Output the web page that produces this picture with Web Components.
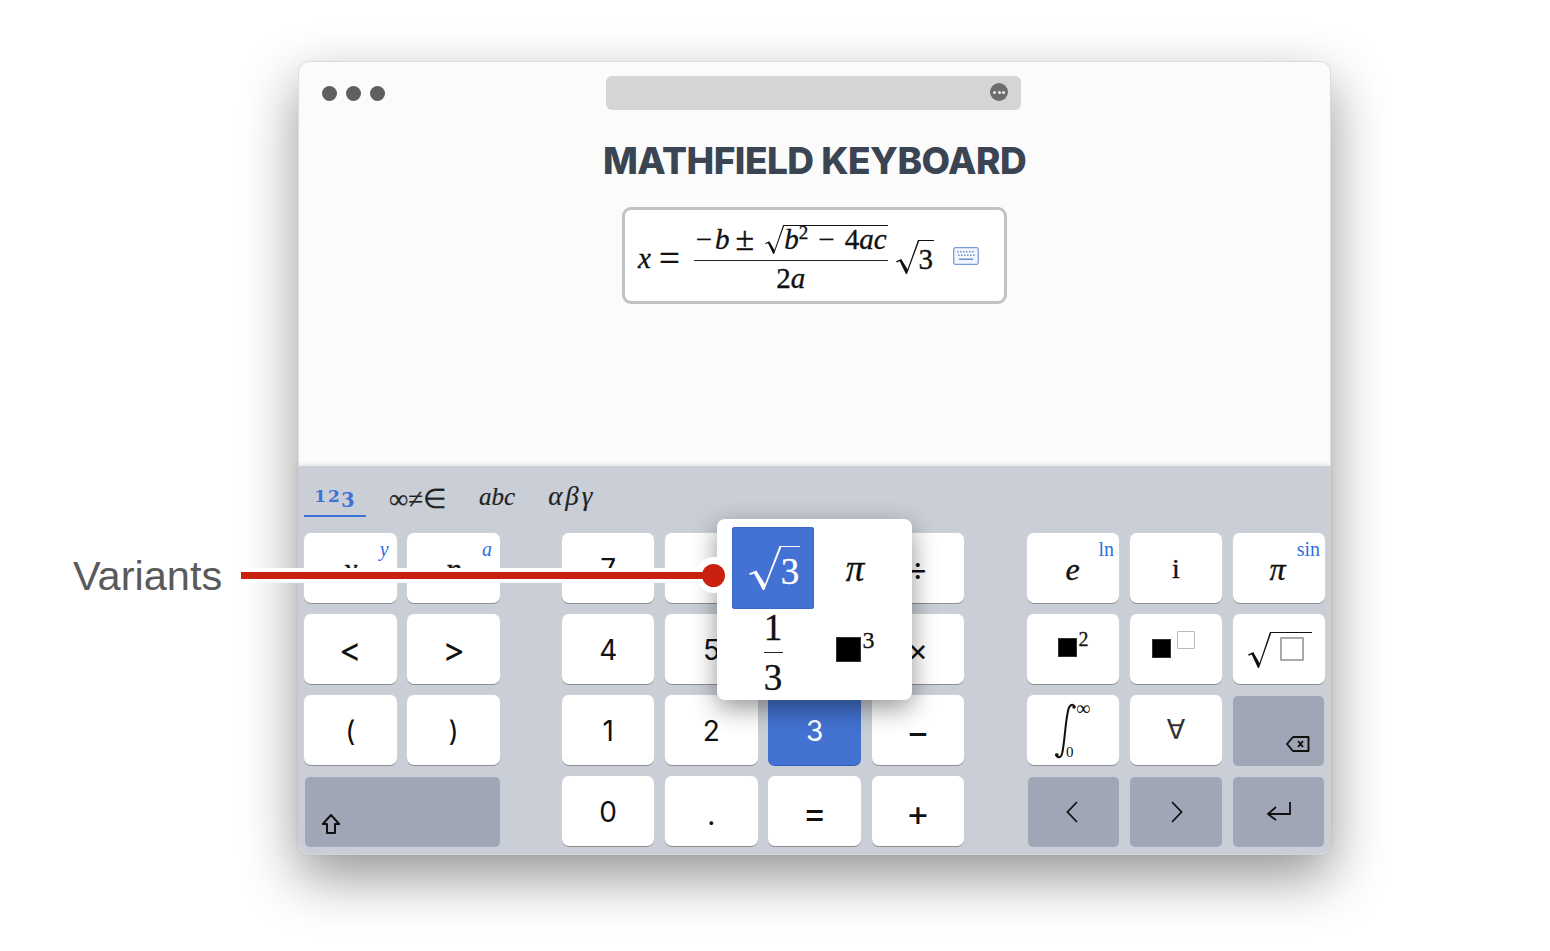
<!DOCTYPE html>
<html lang="en">
<head>
<meta charset="utf-8">
<title>Mathfield keyboard</title>
<style>
  html, body { margin: 0; background: #fff; }
  body { font-family: "Liberation Sans", sans-serif; overflow: hidden; }
</style>
</head>
<body>
<demo-stage>
  <demo-window>
    <h-title slot="title">MATHFIELD KEYBOARD</h-title>
    <math-field slot="field">
      <math-glyph italic size="29">x</math-glyph>
      <math-glyph size="37" style="margin:0 14px 0 8px">=</math-glyph>
      <math-frac style="margin-top:-1px">
        <math-glyph slot="top" size="29" style="margin-left:2px">−<i style="margin-left:3px">b</i></math-glyph>
        <math-glyph slot="top" size="34" style="margin:0 11px 0 6px">±</math-glyph>
        <math-sqrt slot="top" h="29" w="19" bar="1">
          <math-glyph size="29"><i>b</i><sup style="font-size:19px;line-height:0;vertical-align:10px">2</sup></math-glyph>
          <math-glyph size="29" style="margin:0 10px 0 10px">−</math-glyph>
          <math-glyph size="29">4<i>ac</i></math-glyph>
        </math-sqrt>
        <math-glyph slot="bottom" size="29">2<i>a</i></math-glyph>
      </math-frac>
      <math-sqrt h="34" w="23" bar="1" style="margin-left:8px;margin-top:-2px"><math-glyph size="29">3</math-glyph></math-sqrt>
      <kbd-toggle style="margin-left:19px"></kbd-toggle>
    </math-field>
    <virtual-keyboard slot="keyboard">
      <kb-tab slot="tabs" active><span>12<span style="display:inline-block;transform:translateY(4px) scale(1.15)">3</span></span></kb-tab>
      <kb-tab slot="tabs" symbols>∞≠∈</kb-tab>
      <kb-tab slot="tabs" italic>abc</kb-tab>
      <kb-tab slot="tabs" italic wide>αβγ</kb-tab>

      <key-block slot="left" cols="2">
        <kb-key sup="y" sup-italic><math-glyph italic size="32">x</math-glyph></kb-key>
        <kb-key sup="a" sup-italic><math-glyph italic size="32">n</math-glyph></kb-key>
        <kb-key size="34">&lt;</kb-key>
        <kb-key size="34">&gt;</kb-key>
        <kb-key>(</kb-key>
        <kb-key>)</kb-key>
        <kb-key action wide corner="left">
          <svg width="20" height="22" viewBox="0 0 20 22"><path d="M10 2 L18.2 11 H14 V20 H6 V11 H1.8 Z" fill="none" stroke="#111" stroke-width="2" stroke-linejoin="round"/></svg>
        </kb-key>
      </key-block>

      <key-block slot="center" cols="4">
        <kb-key>7</kb-key><kb-key>8</kb-key><kb-key>9</kb-key><kb-key size="31">÷</kb-key>
        <kb-key>4</kb-key><kb-key>5</kb-key><kb-key>6</kb-key><kb-key size="31">×</kb-key>
        <kb-key>1</kb-key><kb-key>2</kb-key><kb-key accent>3</kb-key><kb-key size="36"><span style="padding-top:3px">−</span></kb-key>
        <kb-key>0</kb-key><kb-key><span style="padding-top:6px">.</span></kb-key><kb-key size="36"><span style="padding-top:3px">=</span></kb-key><kb-key size="36"><span style="padding-top:3px">+</span></kb-key>
      </key-block>

      <key-block slot="right" cols="3">
        <kb-key sup="ln"><math-glyph italic size="32" style="margin-right:1px">e</math-glyph></kb-key>
        <kb-key><math-glyph size="28">i</math-glyph></kb-key>
        <kb-key sup="sin"><math-glyph italic size="32" style="margin-right:3px">π</math-glyph></kb-key>
        <kb-key><math-power exp="2" size="19" exp-size="20" drop="9" style="margin-bottom:14px"></math-power></kb-key>
        <kb-key><math-power empty size="19" drop="8" style="margin:0 5px 11px 0"></math-power></kb-key>
        <kb-key><math-sqrt h="36" w="23" bar="1.4" style="margin-left:3px"><math-empty size="24" style="align-self:flex-start;margin:4px 7px 0 9px"></math-empty></math-sqrt></kb-key>
        <kb-key>
          <svg width="46" height="64" viewBox="0 -6 46 64" style="margin:0 -8px 6px 0">
            <path d="M2 52.5 C3 56 6.500 56.500 8 52 C11 40 11.500 14 15 5.500 C16.500 2 19.500 1.800 20.500 4.500" fill="none" stroke="#111" stroke-width="2" stroke-linecap="round"/>
            <circle cx="3" cy="53" r="1.700" fill="#111"/><circle cx="20" cy="5" r="1.700" fill="#111"/>
            <text x="22" y="13" font-family="Liberation Serif" font-size="20" fill="#111">∞</text>
            <text x="12" y="55" font-family="Liberation Serif" font-size="15" fill="#111">0</text>
          </svg>
        </kb-key>
        <kb-key><math-glyph thin size="27" style="margin-bottom:3px;font-family:'DejaVu Sans',sans-serif;color:#333">∀</math-glyph></kb-key>
        <kb-key action corner="right">
          <svg width="24" height="16" viewBox="0 0 24 16"><path d="M7 1 H22.500 V15 H7 L1 8 Z M12 5 L17 11 M17 5 L12 11" fill="none" stroke="#111" stroke-width="1.900" stroke-linejoin="round"/></svg>
        </kb-key>
        <kb-key action>
          <svg width="12" height="22" viewBox="0 0 12 22" style="margin:0 3px 2px 0"><path d="M11 1 L1.500 11 L11 21" fill="none" stroke="#111" stroke-width="1.800"/></svg>
        </kb-key>
        <kb-key action>
          <svg width="12" height="22" viewBox="0 0 12 22" style="margin:0 0 2px 2px"><path d="M1 1 L10.500 11 L1 21" fill="none" stroke="#111" stroke-width="1.800"/></svg>
        </kb-key>
        <kb-key action>
          <svg width="26" height="20" viewBox="0 0 26 20" style="margin-bottom:4px"><path d="M24 1 V13 H2 M10 6 L2 13 L10 19" fill="none" stroke="#111" stroke-width="1.800"/></svg>
        </kb-key>
      </key-block>

      <variants-panel slot="popup">
        <variant-cell selected><math-sqrt h="44" w="32" bar="1.500" style="margin-left:3px"><math-glyph size="37">3</math-glyph></math-sqrt></variant-cell>
        <variant-cell><math-glyph italic size="37">π</math-glyph></variant-cell>
        <variant-cell><math-frac thin style="margin-top:4px"><math-glyph slot="top" size="37">1</math-glyph><math-glyph slot="bottom" size="37">3</math-glyph></math-frac></variant-cell>
        <variant-cell><math-power exp="3" size="25" exp-size="24" drop="9" style="margin-bottom:10px"></math-power></variant-cell>
      </variants-panel>
    </virtual-keyboard>
  </demo-window>
  <call-out label="Variants"></call-out>
</demo-stage>

<script>
function define(name, css, html, cls) {
  const t = document.createElement('template');
  t.innerHTML = `<style>${css}</style>${html}`;
  customElements.define(name, class extends (cls || HTMLElement) {
    constructor() {
      super();
      this.attachShadow({ mode: 'open' });
      this.shadowRoot.appendChild(t.content.cloneNode(true));
    }
    connectedCallback() {
      if (this.setup) this.setup();
    }
  });
}

define('demo-stage', `
  :host { display: block; position: relative; width: 1550px; height: 951px; padding: 61px 0 0 298px; box-sizing: border-box; background: #fff; }
`, `<slot></slot>`);

define('demo-window', `
  :host { display: flex; flex-direction: column; width: 1033px; height: 794px; box-sizing: border-box; background: #fbfbfb; border: 1px solid #dcdcdc; border-radius: 11px; box-shadow: 0 22px 55px rgba(0,0,0,.42); }
  .bar { display: flex; align-items: center; height: 34px; margin-top: 14px; }
  .dots { display: flex; gap: 9px; margin-left: 23px; }
  .dots i { width: 15px; height: 15px; border-radius: 50%; background: #5f5f5f; }
  .url { display: flex; align-items: center; justify-content: flex-end; width: 415px; height: 34px; margin-left: 221px; padding-right: 13px; box-sizing: border-box; background: #d5d5d5; border-radius: 6px; }
  .more { display: flex; gap: 1.500px; align-items: center; justify-content: center; width: 18px; height: 18px; margin-top: -2px; border-radius: 50%; background: #6d6d6d; }
  .more i { width: 3px; height: 3px; border-radius: 50%; background: #eee; }
  .head { display: flex; justify-content: center; margin-top: 29px; }
  .field { display: flex; justify-content: center; margin-top: 24px; }
  .kbd { margin-top: auto; }
`, `
  <div class="bar">
    <div class="dots"><i></i><i></i><i></i></div>
    <div class="url"><div class="more"><i></i><i></i><i></i></div></div>
  </div>
  <div class="head"><slot name="title"></slot></div>
  <div class="field"><slot name="field"></slot></div>
  <div class="kbd"><slot name="keyboard"></slot></div>
`);

define('h-title', `
  :host { display: block; font: 800 37px/44px Inter, "Liberation Sans", sans-serif; letter-spacing: -.5px; color: #3a4452; white-space: nowrap; }
`, `<slot></slot>`);

define('math-field', `
  :host { display: flex; align-items: center; width: 385px; height: 97px; box-sizing: border-box; padding: 5px 0 0 13px; background: #fff; border: 3px solid #c2c2c2; border-radius: 9px; color: #111; }
`, `<slot></slot>`);

define('math-glyph', `
  :host { display: inline-block; font-family: "Liberation Serif", "DejaVu Serif", serif; font-size: var(--size, 27px); line-height: 1; white-space: nowrap; color: inherit; -webkit-text-stroke: .35px currentColor; }
  :host([italic]) { font-style: italic; }
  :host([thin]) { -webkit-text-stroke: 0; }
`, `<slot></slot>`, class extends HTMLElement {
  setup() { this.style.setProperty('--size', this.getAttribute('size') + 'px'); }
});

define('math-frac', `
  :host { display: inline-flex; flex-direction: column; align-items: center; }
  .top { display: flex; align-items: center; padding: 0 0 4px; }
  .bottom { display: flex; width: 100%; justify-content: center; border-top: 1.500px solid #222; padding-top: 3px; }
  :host([thin]) .top { padding: 0 0 6px; }
  :host([thin]) .bottom { padding: 6px 0 0; width: 19px; }
  :host([thin]) .top, :host([thin]) .bottom { justify-content: center; }
`, `<div class="top"><slot name="top"></slot></div><div class="bottom"><slot name="bottom"></slot></div>`);

define('math-sqrt', `
  :host { display: inline-flex; align-items: stretch; height: var(--h); }
  svg { width: var(--w); height: var(--h); flex: none; fill: currentColor; display: block; }
  .body { display: flex; align-items: flex-end; padding-right: 1px; border-top: var(--bar) solid currentColor; }
`, `
  <svg viewBox="0 0 22 44" preserveAspectRatio="none"><path d="M0 27.500 L5 24.500 L11 38 L21 0 L22 0 L22 2 L10.500 44 L9.500 44 L3.500 27.500 L0.800 29 Z"/></svg>
  <div class="body"><slot></slot></div>
`, class extends HTMLElement {
  setup() {
    this.style.setProperty('--h', this.getAttribute('h') + 'px');
    this.style.setProperty('--w', this.getAttribute('w') + 'px');
    this.style.setProperty('--bar', this.getAttribute('bar') + 'px');
  }
});

define('math-empty', `
  :host { display: block; width: var(--size); height: var(--size); box-sizing: border-box; border: 2px solid #aaa; border-radius: 1px; }
`, ``, class extends HTMLElement {
  setup() { this.style.setProperty('--size', this.getAttribute('size') + 'px'); }
});

define('math-power', `
  :host { display: inline-flex; align-items: flex-start; color: #111; }
  .sq { width: var(--size); height: var(--size); margin-top: var(--drop); background: #000; box-shadow: inset 0 0 0 1px #333; }
  .exp { font-family: "Liberation Serif", serif; font-size: var(--exp); line-height: 1; margin-left: 2px; -webkit-text-stroke: .3px currentColor; }
  .box { width: 18px; height: 18px; margin: 0 0 0 6px; box-sizing: border-box; border: 1px solid #bbb; border-radius: 1px; }
`, `<div class="sq"></div><div class="sup"></div>`, class extends HTMLElement {
  setup() {
    this.style.setProperty('--size', this.getAttribute('size') + 'px');
    this.style.setProperty('--drop', this.getAttribute('drop') + 'px');
    this.style.setProperty('--exp', (this.getAttribute('exp-size') || 20) + 'px');
    const sup = this.shadowRoot.querySelector('.sup');
    if (this.hasAttribute('empty')) {
      sup.className = 'box';
    } else {
      sup.className = 'exp';
      sup.textContent = this.getAttribute('exp');
    }
  }
});

define('kbd-toggle', `
  :host { display: inline-flex; width: 26px; height: 18px; margin-top: -4px; }
  svg { display: block; }
`, `
  <svg width="26" height="18" viewBox="0 0 26 18">
    <rect x=".7" y=".7" width="24.600" height="16.600" rx="1.500" fill="#f3f6fc" stroke="#7a9bd8" stroke-width="1.300"/>
    <g fill="#6d8fd0">
      <rect x="4" y="4" width="1.500" height="1.500"/><rect x="7" y="4" width="1.500" height="1.500"/><rect x="10" y="4" width="1.500" height="1.500"/><rect x="13" y="4" width="1.500" height="1.500"/><rect x="16" y="4" width="1.500" height="1.500"/><rect x="19" y="4" width="1.500" height="1.500"/>
      <rect x="5" y="7.500" width="1.500" height="1.500"/><rect x="8" y="7.500" width="1.500" height="1.500"/><rect x="11" y="7.500" width="1.500" height="1.500"/><rect x="14" y="7.500" width="1.500" height="1.500"/><rect x="17" y="7.500" width="1.500" height="1.500"/><rect x="20" y="7.500" width="1.500" height="1.500"/>
      <rect x="6" y="11.500" width="14" height="1.500"/>
    </g>
  </svg>
`);

define('virtual-keyboard', `
  :host { display: flex; flex-direction: column; position: relative; height: 388px; box-sizing: border-box; padding: 0 5px 8px; background: #cacfd7; border-radius: 0 0 10px 10px; box-shadow: 0 -1px 5px rgba(0,0,0,.12); }
  .tabs { display: flex; height: 67px; box-sizing: border-box; padding-top: 14px; }
  .rows { display: flex; gap: 62px; }
  ::slotted([slot="right"]) { margin-left: auto; }
`, `
  <div class="tabs"><slot name="tabs"></slot></div>
  <div class="rows">
    <slot name="left"></slot>
    <slot name="center"></slot>
    <slot name="right"></slot>
  </div>
  <slot name="popup"></slot>
`);

define('kb-tab', `
  :host { display: flex; align-items: center; justify-content: center; height: 37px; box-sizing: border-box; font: 24px/1 "Liberation Serif", serif; color: #222; -webkit-text-stroke: .2px currentColor; }
  :host([symbols]) { font-size: 27px; padding: 2px 15px 0 13px; }
  :host([italic]) { font-style: italic; padding: 0 17px 5px 17px; font-size: 25px; }
  :host([wide]) { font-size: 27px; letter-spacing: 3px; padding-left: 16px; }
  :host([active]) { width: 62px; padding: 0 0 3px; font: 700 17px/1 "DejaVu Serif", serif; letter-spacing: 2px; color: #3f72d8; border-bottom: 2px solid #3f72d8; margin-right: 10px; -webkit-text-stroke: 0; }
`, `<slot></slot>`);

define('key-block', `
  :host { display: grid; grid-auto-rows: 70px; row-gap: 11px; column-gap: 10.800px; }
  :host([cols="2"]) { width: 196px; grid-template-columns: repeat(2, 1fr); }
  :host([cols="3"]) { width: 298px; grid-template-columns: repeat(3, 1fr); }
  :host([cols="4"]) { width: 402px; grid-template-columns: repeat(4, 1fr); }
`, `<slot></slot>`);

define('kb-key', `
  :host { display: flex; align-items: center; justify-content: center; position: relative; background: #fff; border-radius: 7px; box-shadow: 0 1px 0 #8f8f8f, 0 0 1px rgba(255,255,255,.6); font: var(--key-size, 28px)/1 Inter, "Liberation Sans", sans-serif; color: #111; padding-top: 1px; box-sizing: border-box; }
  :host([wide]) { grid-column: span 2; }
  :host([action]) { background: #a0a6b5; box-shadow: none; border-radius: 5px; top: 1px; margin: 0 .5px; }
  :host([accent]) { background: #4372d2; color: #fff; box-shadow: 0 1px 0 #2f5db8; }
  :host([corner]) { align-items: flex-end; padding-bottom: 14px; }
  :host([corner="left"]) { justify-content: flex-start; padding-left: 16px; padding-bottom: 12px; }
  :host([corner="right"]) { justify-content: flex-end; padding-right: 14px; }
  .sup { position: absolute; top: 6px; right: 5px; font: 20px/1 "Liberation Serif", serif; color: #2f6fe0; }
  :host([sup-italic]) .sup { font-style: italic; right: 8px; }
`, `<slot></slot><span class="sup"></span>`, class extends HTMLElement {
  setup() {
    if (this.hasAttribute('size')) this.style.setProperty('--key-size', this.getAttribute('size') + 'px');
    this.shadowRoot.querySelector('.sup').textContent = this.getAttribute('sup') || '';
  }
});

define('variants-panel', `
  :host { display: grid; grid-template-columns: 82px 82px; grid-auto-rows: 82px; position: absolute; left: 418px; top: 53px; width: 195px; height: 181px; box-sizing: border-box; padding: 8px 0 0 15px; background: #fff; border-radius: 8px; box-shadow: 0 8px 26px rgba(0,0,0,.42); z-index: 2; }
`, `<slot></slot>`);

define('variant-cell', `
  :host { display: flex; align-items: center; justify-content: center; border-radius: 3px; color: #111; }
  :host([selected]) { background: #4472d4; color: #fff; box-shadow: inset 0 0 0 1px #3a68cb; }
`, `<slot></slot>`);

define('call-out', `
  :host { display: block; position: absolute; left: 0; top: 0; width: 100%; z-index: 5; pointer-events: none; }
  .label { position: absolute; left: 73px; top: 552px; font: 41.500px/48px "Liberation Sans", Arial, sans-serif; color: #5a5a5a; }
  .halo-line { position: absolute; left: 240px; top: 568px; width: 474px; height: 15px; background: #fff; }
  .line { position: absolute; left: 241px; top: 572px; width: 473px; height: 7px; background: #c9200f; }
  .halo { position: absolute; left: 696px; top: 557px; width: 36px; height: 36px; border-radius: 50%; background: #fff; }
  .dot { position: absolute; left: 702px; top: 564px; width: 23px; height: 23px; border-radius: 50%; background: #c9200f; }
`, `
  <div class="label"></div>
  <div class="halo-line"></div><div class="halo"></div>
  <div class="line"></div><div class="dot"></div>
`, class extends HTMLElement {
  setup() { this.shadowRoot.querySelector('.label').textContent = this.getAttribute('label'); }
});
</script>
</body>
</html>
